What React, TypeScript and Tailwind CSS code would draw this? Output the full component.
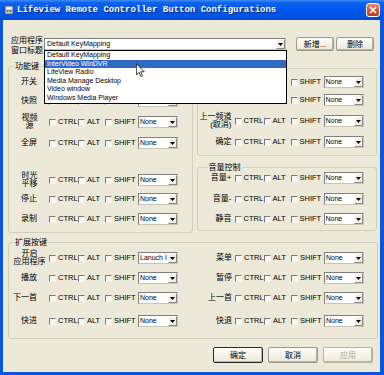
import React from 'react';

const Check: React.FC = () => (
  <span className="block h-[7px] w-[7px] shrink-0 border border-t-[#7a7a7a] border-l-[#7a7a7a] border-r-[#f4f3ee] border-b-[#f4f3ee] bg-[#f7f6f2]" />
);

const Arrow: React.FC = () => (
  <svg width="5" height="3" viewBox="0 0 5 3">
    <path d="M0 0h5L2.5 3z" fill="#000" />
  </svg>
);

const Select: React.FC<{ value: string }> = ({ value }) => (
  <div className="flex h-[12px] w-[40px] shrink-0 border border-t-[#7f7f7f] border-l-[#7f7f7f] border-r-[#c8c5b8] border-b-[#c8c5b8] bg-white">
    <span className="flex-1 overflow-hidden whitespace-nowrap pl-[1px] text-[7px] leading-[10px]">{value}</span>
    <span className="flex w-[9px] items-center justify-center border border-t-[#fff] border-l-[#fff] border-r-[#8a8a8a] border-b-[#8a8a8a] bg-[#f1efe6]">
      <Arrow />
    </span>
  </div>
);

const Pair: React.FC<{ text: string; width: string }> = ({ text, width }) => (
  <div className={`flex items-center gap-[2px] ${width}`}>
    <Check />
    <span className="text-[7.5px] leading-[8px]">{text}</span>
  </div>
);

type RowProps = {
  label: React.ReactNode;
  side?: 'left' | 'right';
  align?: 'right' | 'center';
  mt: string;
  value?: string;
};

const KeyRow: React.FC<RowProps> = ({ label, side = 'left', align = 'right', mt, value = 'None' }) => {
  const labelBox =
    side === 'right'
      ? 'w-[34px] text-right'
      : align === 'center'
        ? 'ml-[4px] w-[33px] text-center'
        : 'ml-[4px] w-[33px] pr-[9px] text-right';
  return (
    <div className={`flex h-[12px] items-center ${mt}`}>
      <div className={`${labelBox} whitespace-nowrap text-[8px] leading-[8.5px]`}>{label}</div>
      <div className="ml-[3px] flex items-center">
        <Pair text="CTRL" width="w-[29px]" />
        <Pair text="ALT" width="w-[27px]" />
        <Pair text="SHIFT" width="w-[33px]" />
        <Select value={value} />
      </div>
    </div>
  );
};

const Group: React.FC<{ title?: string; className: string; legendClass?: string; children: React.ReactNode }> = ({
  title,
  className,
  legendClass = 'ml-[5px]',
  children,
}) => (
  <fieldset className={`rounded-[3px] border border-[#d0d0bf] ${className}`}>
    {title && <legend className={`px-[1px] text-[8px] leading-[9px] ${legendClass}`}>{title}</legend>}
    {children}
  </fieldset>
);

const XpButton: React.FC<{ children: React.ReactNode; className: string }> = ({ children, className }) => (
  <div
    className={`flex items-center justify-center rounded-[2px] bg-[linear-gradient(to_bottom,#fdfdfb,#ece9d8)] text-[8px] leading-[9px] shadow-[inset_-1px_-1px_0_#b9b5a3] ${className}`}
  >
    {children}
  </div>
);

const items = ['Default KeyMapping', 'InterVideo WinDVR', 'LifeView Radio', 'Media Manage Desktop', 'Video window', 'Windows Media Player'];

export default function App() {
  return (
    <div className="flex h-[375px] w-[384px] flex-col overflow-hidden font-['Liberation_Sans','Noto_Sans_CJK_SC',sans-serif] text-black">
      {/* Title bar */}
      <div className="flex h-[20px] shrink-0 items-center bg-[linear-gradient(to_bottom,#3d8ef6_0%,#0c61ee_14%,#0058ee_50%,#0053e0_85%,#0049c8_100%)] pl-[4px] pr-[4px]">
        <svg width="10" height="10" viewBox="0 0 10 10">
          <rect x="1" y="1" width="8" height="8" rx="1" fill="#c9ced8" stroke="#4a5568" strokeWidth="0.8" />
          <rect x="2.5" y="2.5" width="5" height="1.5" fill="#fff" />
          <rect x="2.5" y="5" width="2" height="2" fill="#6b7280" />
          <rect x="5.5" y="5" width="2" height="2" fill="#6b7280" />
        </svg>
        <span className="ml-[3px] font-['Liberation_Mono',monospace] text-[9px] font-bold leading-[10px] text-white [text-shadow:1px_1px_0_#0a2a80]">
          Lifeview Remote Controller Button Configurations
        </span>
        <div className="ml-auto flex h-[14px] w-[14px] items-center justify-center rounded-[3px] border border-white bg-[linear-gradient(to_bottom,#e98d6e,#d5512b_55%,#c23a1c)]">
          <svg width="8" height="8" viewBox="0 0 8 8">
            <path d="M1 1L7 7M7 1L1 7" stroke="#fff" strokeWidth="1.6" />
          </svg>
        </div>
      </div>

      {/* Body */}
      <div className="flex flex-1 flex-col border-l-[3px] border-r-[4px] border-b-[3px] border-[#0b55e0] bg-[#ece9d8] pl-[5px] pr-[3px]">
        {/* Mapping selector */}
        <div className="relative mt-[16px] flex items-start">
          <div className="ml-[3px] w-[33px] text-[8px] leading-[9.5px]">
            应用程序
            <br />
            窗口标题
          </div>
          <div className="mt-[2px] flex h-[12px] w-[242px] border border-t-[#7f7f7f] border-l-[#7f7f7f] border-r-[#c8c5b8] border-b-[#c8c5b8] bg-white">
            <span className="flex-1 pl-[2px] text-[7px] leading-[10px]">Default KeyMapping</span>
            <span className="flex w-[9px] items-center justify-center border border-t-[#fff] border-l-[#fff] border-r-[#8a8a8a] border-b-[#8a8a8a] bg-[#f1efe6]">
              <Arrow />
            </span>
          </div>
          <XpButton className="ml-[10px] mt-[1px] h-[14px] w-[38px] border border-[#9a9a8e]">新增...</XpButton>
          <XpButton className="ml-[2px] mt-[1px] h-[14px] w-[38px] border border-[#9a9a8e]">删除</XpButton>

          {/* open list */}
          <div className="absolute left-[36px] top-[14px] w-[243px] border border-black bg-white">
            {items.map((it, i) => (
              <div
                key={it}
                className={`h-[8.6px] pl-[2px] text-[7px] leading-[8.6px] ${i === 1 ? 'bg-[#316ac5] text-white' : ''}`}
              >
                {it}
              </div>
            ))}
          </div>
          <svg className="absolute left-[128px] top-[27px]" width="9" height="15" viewBox="0 0 12 19">
            <path d="M0.5 0.5L0.5 15.5L4 12L6.5 17.5L8.7 16.5L6.3 11.2L11 11.2Z" fill="#fff" stroke="#000" strokeWidth="1" />
          </svg>
        </div>

        {/* Upper groups */}
        <div className="mt-[7px] flex gap-[4px]">
          <Group title="功能键" className="h-[171px] w-[185px]">
            <KeyRow label="开关" mt="mt-[5px]" />
            <KeyRow label="快照" mt="mt-[7px]" />
            <KeyRow label={<>视频<br />源</>} align="center" mt="mt-[9px]" />
            <KeyRow label="全屏" mt="mt-[9px]" />
            <KeyRow label={<>时光<br />平移</>} align="center" mt="mt-[25px]" />
            <KeyRow label="停止" mt="mt-[7px]" />
            <KeyRow label="录制" mt="mt-[8px]" />
          </Group>
          <div className="flex w-[181px] flex-col">
            <Group className="mt-[6px] h-[88px]">
              <KeyRow label="下一频道" side="right" mt="mt-[7px]" />
              <KeyRow label="频道" side="right" mt="mt-[6px]" />
              <KeyRow label={<>上一频道<br />(取消)</>} side="right" mt="mt-[9px]" />
              <KeyRow label="确定" side="right" mt="mt-[9px]" />
            </Group>
            <Group title="音量控制" legendClass="ml-[10px]" className="mt-[7px] h-[68px]">
              <KeyRow label="音量+" side="right" mt="mt-[0px]" />
              <KeyRow label="音量-" side="right" mt="mt-[9px]" />
              <KeyRow label="静音" side="right" mt="mt-[8px]" />
            </Group>
          </div>
        </div>

        {/* Extended keys */}
        <Group title="扩展按键" className="mt-[5px] h-[101px] w-[370px]">
          <div className="grid grid-cols-[189px_1fr]">
            <div>
              <KeyRow label={<>开启<br />应用程序</>} align="center" mt="mt-[5px]" value="Lanuch I" />
              <KeyRow label="播放" mt="mt-[8px]" />
              <KeyRow label="下一首" mt="mt-[8px]" />
              <KeyRow label="快进" mt="mt-[11px]" />
            </div>
            <div>
              <KeyRow label="菜单" side="right" mt="mt-[5px]" />
              <KeyRow label="暂停" side="right" mt="mt-[8px]" />
              <KeyRow label="上一首" side="right" mt="mt-[8px]" />
              <KeyRow label="快退" side="right" mt="mt-[11px]" />
            </div>
          </div>
        </Group>

        {/* Dialog buttons */}
        <div className="mr-[4px] mt-[8px] flex justify-end gap-[5px]">
          <XpButton className="h-[16px] w-[50px] border border-[#2b2b2b]">确定</XpButton>
          <XpButton className="h-[16px] w-[50px] border border-[#9a9a8e]">取消</XpButton>
          <XpButton className="h-[16px] w-[50px] border border-[#b5b2a4] text-[#aca899]">应用</XpButton>
        </div>
      </div>
    </div>
  );
}
